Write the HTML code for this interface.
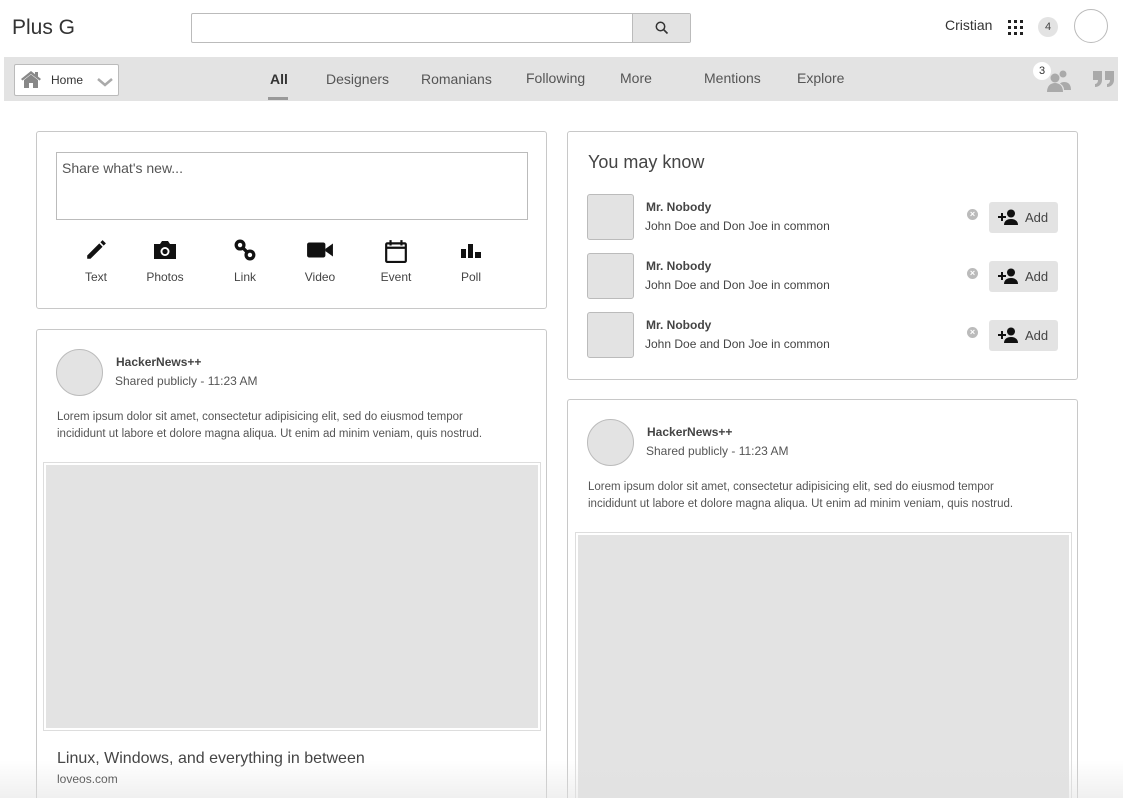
<!DOCTYPE html>
<html><head><meta charset="utf-8"><style>
*{box-sizing:border-box;margin:0;padding:0}
html,body{width:1123px;height:798px;overflow:hidden}
body{background:#fff;font-family:"Liberation Sans",sans-serif;color:#444;position:relative}
.a{position:absolute}
.card{position:absolute;border:1px solid #c8c8c8;border-radius:3px;background:#fff;overflow:hidden}
.cut{border-bottom:none;border-radius:3px 3px 0 0}
.nav{font-size:14px;color:#555;top:71px}
.ic{position:absolute;top:239px;width:60px;text-align:center;font-size:12px;color:#444}
.ic .g{height:24px;margin-bottom:7px}
.ic svg{display:block;margin:0 auto}
.row .av{position:absolute;left:19px;width:47px;height:46px;background:#e3e3e3;border:1px solid #bbb;border-radius:3px}
.nm{font-size:12px;font-weight:bold;color:#444}
.sub{font-size:12px;color:#444}
.add{position:absolute;left:421px;width:69px;height:31px;background:#e3e3e3;border-radius:3px;font-size:13px;color:#444}
.x{position:absolute;left:399px;width:11px;height:11px;border-radius:50%;background:#bbb;color:#fff;font-size:9px;line-height:11px;text-align:center;font-weight:bold}
.lor{font-size:11.5px;color:#555;line-height:17px;width:455px}
</style></head><body>
<div class="a" style="left:12px;top:16px;font-size:21px;color:#333">Plus G</div>
<div class="a" style="left:191px;top:13px;width:500px;height:30px;border:1px solid #bbb;border-radius:2px"></div>
<div class="a" style="left:632px;top:14px;width:58px;height:28px;background:#e3e3e3;border-left:1px solid #bbb"></div>
<svg class="a" style="left:655px;top:21px" width="14" height="14" viewBox="0 0 14 14"><circle cx="5.5" cy="5.5" r="4.2" fill="none" stroke="#333" stroke-width="1.5"/><path d="M8.5 8.5L12.5 12.5" stroke="#333" stroke-width="1.6"/></svg>
<div class="a" style="left:945px;top:17px;font-size:14px;color:#333">Cristian</div>
<svg class="a" style="left:1007px;top:19px" width="17" height="17" viewBox="0 0 17 17" fill="#222"><rect x="1" y="1" width="3" height="3"/><rect x="7" y="1" width="3" height="3"/><rect x="13" y="1" width="3" height="3"/><rect x="1" y="7" width="3" height="3"/><rect x="7" y="7" width="3" height="3"/><rect x="13" y="7" width="3" height="3"/><rect x="1" y="13" width="3" height="3"/><rect x="7" y="13" width="3" height="3"/><rect x="13" y="13" width="3" height="3"/></svg>
<div class="a" style="left:1038px;top:17px;width:20px;height:20px;border-radius:50%;background:#e3e3e3;font-size:11px;text-align:center;line-height:20px;color:#444">4</div>
<div class="a" style="left:1074px;top:9px;width:34px;height:34px;border-radius:50%;border:1px solid #bbb"></div>

<div class="a" style="left:4px;top:57px;width:1114px;height:44px;background:#e3e3e3"></div>
<div class="a" style="left:14px;top:64px;width:105px;height:32px;background:#fff;border:1px solid #bbb;border-radius:2px"></div>
<svg class="a" style="left:20px;top:70px" width="22" height="18" viewBox="0 0 22 18" fill="#888"><path d="M11 1L1 9l1.5 1.5L11 4l8.5 6.5L21 9z"/><path d="M4 10l7-5.5 7 5.5v8h-5v-5h-4v5H4z"/><rect x="15" y="2" width="3" height="5"/></svg>
<div class="a" style="left:51px;top:73px;font-size:12px;color:#333">Home</div>
<svg class="a" style="left:97px;top:78px" width="16" height="9" viewBox="0 0 16 9"><path d="M1 1l7 6 7-6" fill="none" stroke="#aaa" stroke-width="2.5"/></svg>
<div class="a nav" style="left:270px;font-weight:bold;color:#333">All</div>
<div class="a" style="left:268px;top:97px;width:20px;height:3px;background:#999"></div>
<div class="a nav" style="left:326px">Designers</div>
<div class="a nav" style="left:421px">Romanians</div>
<div class="a nav" style="left:526px;top:70px">Following</div>
<div class="a nav" style="left:620px;top:70px">More</div>
<div class="a nav" style="left:704px;top:70px">Mentions</div>
<div class="a nav" style="left:797px;top:70px">Explore</div>
<svg class="a" style="left:1044px;top:68px" width="28" height="24" viewBox="0 0 28 24" fill="#aaa"><circle cx="19" cy="6" r="3.5"/><circle cx="11" cy="10" r="4.5"/><path d="M3 24c0-6 3.5-9 8-9s8 3 8 9z"/><path d="M20 22h7c0-6-3-8-7-8-1.5 0-3 .5-4 1.5 2.5 1.5 4 3.5 4 6.5z"/></svg>
<div class="a" style="left:1033px;top:62px;width:18px;height:18px;border-radius:50%;background:#fff;font-size:11px;text-align:center;line-height:18px;color:#333">3</div>
<svg class="a" style="left:1092px;top:70px" width="24" height="18" viewBox="0 0 24 18" fill="#aaa"><path d="M1 1h9v9c0 4-3 7-7 7v-3c2 0 3-2 3-4H1z"/><path d="M13 1h9v9c0 4-3 7-7 7v-3c2 0 3-2 3-4h-5z"/></svg>

<!-- composer -->
<div class="card" style="left:36px;top:131px;width:511px;height:178px"></div>
<div class="a" style="left:56px;top:152px;width:472px;height:68px;border:1px solid #bbb;font-size:14px;color:#555;padding:7px 5px">Share what's new...</div>
<div class="ic" style="left:66px"><div class="g"><svg width="22" height="22" viewBox="0 0 20 20"><path d="M2 15L13 4l3 3L5 18H2z M14 3l2-2 3 3-2 2z" fill="#111"/></svg></div>Text</div>
<div class="ic" style="left:135px"><div class="g"><svg width="26" height="22" viewBox="0 0 26 20"><path d="M2 4h6l2-3h6l2 3h6v15H2z" fill="#111"/><circle cx="13" cy="11.5" r="4.5" fill="#fff"/><circle cx="13" cy="11.5" r="2.6" fill="#111"/></svg></div>Photos</div>
<div class="ic" style="left:215px"><div class="g"><svg width="22" height="22" viewBox="0 0 20 20" fill="none" stroke="#111" stroke-width="3"><rect x="2" y="2" width="7" height="7" rx="3.5"/><rect x="11" y="11" width="7" height="7" rx="3.5"/><path d="M8 8l4 4"/></svg></div>Link</div>
<div class="ic" style="left:290px"><div class="g"><svg width="28" height="22" viewBox="0 0 26 20" fill="#111"><rect x="1" y="3" width="17" height="14" rx="2"/><path d="M18 9l7-5v12l-7-5z"/></svg></div>Video</div>
<div class="ic" style="left:366px"><div class="g"><svg width="24" height="24" viewBox="0 0 22 22" fill="none" stroke="#111" stroke-width="2"><rect x="2" y="4" width="18" height="17" rx="1"/><path d="M2 8h18M6 1v5M16 1v5"/></svg></div>Event</div>
<div class="ic" style="left:441px"><div class="g"><svg width="22" height="22" viewBox="0 0 22 20" fill="#111"><rect x="1" y="9" width="5" height="9"/><rect x="8" y="4" width="5" height="14"/><rect x="15" y="12" width="6" height="6"/></svg></div>Poll</div>

<!-- you may know -->
<div class="card" style="left:567px;top:131px;width:511px;height:249px">
<div class="a" style="left:20px;top:20px;font-size:18px;color:#444">You may know</div>
<div class="row a" style="left:0;top:62px;width:509px"><div class="av"></div><div class="a nm" style="left:78px;top:6px">Mr. Nobody</div><div class="a sub" style="left:77px;top:25px">John Doe and Don Joe in common</div><div class="x" style="top:15px">×</div><div class="add" style="top:8px"><svg class="a" style="left:9px;top:7px" width="20" height="16" viewBox="0 0 20 16" fill="#111"><path d="M0 7h3V4h2v3h3v2H5v3H3V9H0z"/><circle cx="13" cy="4.5" r="4"/><path d="M6 16c0-4 3-6 7-6s7 2 7 6z"/></svg><span class="a" style="left:36px;top:8px">Add</span></div></div>
<div class="row a" style="left:0;top:121px;width:509px"><div class="av"></div><div class="a nm" style="left:78px;top:6px">Mr. Nobody</div><div class="a sub" style="left:77px;top:25px">John Doe and Don Joe in common</div><div class="x" style="top:15px">×</div><div class="add" style="top:8px"><svg class="a" style="left:9px;top:7px" width="20" height="16" viewBox="0 0 20 16" fill="#111"><path d="M0 7h3V4h2v3h3v2H5v3H3V9H0z"/><circle cx="13" cy="4.5" r="4"/><path d="M6 16c0-4 3-6 7-6s7 2 7 6z"/></svg><span class="a" style="left:36px;top:8px">Add</span></div></div>
<div class="row a" style="left:0;top:180px;width:509px"><div class="av"></div><div class="a nm" style="left:78px;top:6px">Mr. Nobody</div><div class="a sub" style="left:77px;top:25px">John Doe and Don Joe in common</div><div class="x" style="top:15px">×</div><div class="add" style="top:8px"><svg class="a" style="left:9px;top:7px" width="20" height="16" viewBox="0 0 20 16" fill="#111"><path d="M0 7h3V4h2v3h3v2H5v3H3V9H0z"/><circle cx="13" cy="4.5" r="4"/><path d="M6 16c0-4 3-6 7-6s7 2 7 6z"/></svg><span class="a" style="left:36px;top:8px">Add</span></div></div>
</div>

<!-- left post -->
<div class="card cut" style="left:36px;top:329px;width:511px;height:469px">
<div class="a" style="left:19px;top:19px;width:47px;height:47px;border-radius:50%;background:#e3e3e3;border:1px solid #bbb"></div>
<div class="a nm" style="left:79px;top:25px">HackerNews++</div>
<div class="a sub" style="left:78px;top:44px;color:#555">Shared publicly - 11:23 AM</div>
<div class="a lor" style="left:20px;top:79px">Lorem ipsum dolor sit amet, consectetur adipisicing elit, sed do eiusmod tempor incididunt ut labore et dolore magna aliqua. Ut enim ad minim veniam, quis nostrud.</div>
<div class="a" style="left:6px;top:132px;width:498px;height:269px;border:1px solid #ddd;padding:2px"><div style="width:100%;height:100%;background:#e3e3e3"></div></div>
<div class="a" style="left:20px;top:420px;font-size:16px;color:#444">Linux, Windows, and everything in between</div>
<div class="a" style="left:20px;top:442px;font-size:12px;color:#333">loveos.com</div>
</div>

<!-- right post -->
<div class="card cut" style="left:567px;top:399px;width:511px;height:399px">
<div class="a" style="left:19px;top:19px;width:47px;height:47px;border-radius:50%;background:#e3e3e3;border:1px solid #bbb"></div>
<div class="a nm" style="left:79px;top:25px">HackerNews++</div>
<div class="a sub" style="left:78px;top:44px;color:#555">Shared publicly - 11:23 AM</div>
<div class="a lor" style="left:20px;top:79px">Lorem ipsum dolor sit amet, consectetur adipisicing elit, sed do eiusmod tempor incididunt ut labore et dolore magna aliqua. Ut enim ad minim veniam, quis nostrud.</div>
<div class="a" style="left:7px;top:132px;width:497px;height:267px;border:1px solid #ddd;border-bottom:none;padding:2px 2px 0"><div style="width:100%;height:100%;background:#e3e3e3"></div></div>
</div>

<div class="a" style="left:0;top:760px;width:1123px;height:38px;background:linear-gradient(rgba(255,255,255,0),rgba(225,225,225,.5))"></div>
</body></html>
